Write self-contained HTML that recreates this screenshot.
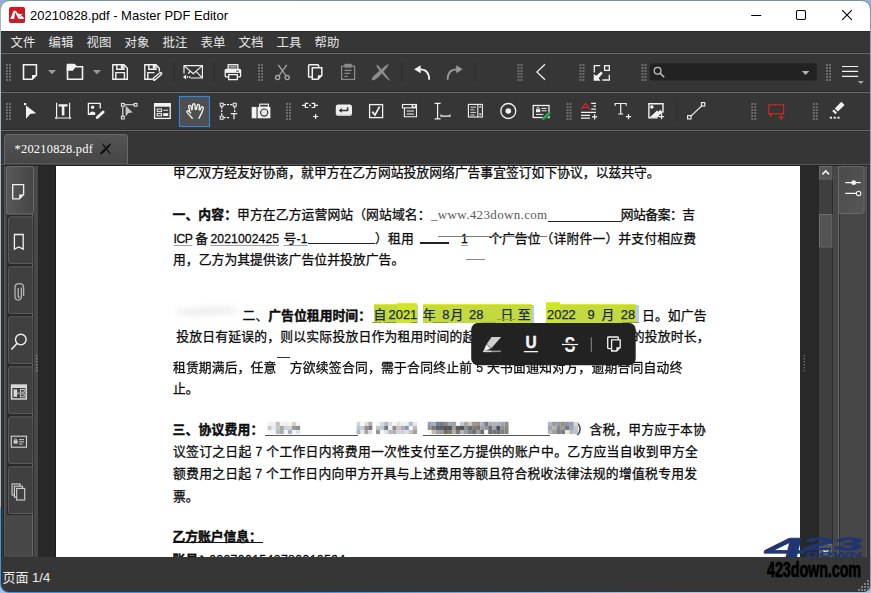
<!DOCTYPE html>
<html lang="zh-CN">
<head>
<meta charset="utf-8">
<title>20210828.pdf - Master PDF Editor</title>
<style>
html,body{margin:0;padding:0;}
body{width:871px;height:593px;overflow:hidden;position:relative;background:#3c5f9a;font-family:"Liberation Sans","Noto Sans CJK SC",sans-serif;}
.abs{position:absolute;}
#desk{left:0;top:0;width:871px;height:593px;background:linear-gradient(to bottom,#8fb0d8 0,#a8c4e0 100%);}
#frame{left:0;top:0;width:871px;height:593px;border-radius:9px 9px 7px 9px;background:linear-gradient(to bottom,#7690aa 0px,#a2b6ca 12px,#a4b8cc 506px,#4a96e0 508px,#3f90dd 593px) left top/300px 100% no-repeat,linear-gradient(to right,#3f90dd 0,#3f90dd 300px,#a8c4e0 700px) left bottom/100% 2px no-repeat,linear-gradient(to bottom,#7690aa 0,#8ca4bc 40px,#8ca4bc 100%);}
#win{left:1px;top:1px;width:869px;height:591px;background:#363636;border-radius:8px 8px 6px 8px;overflow:hidden;}
#title{left:0;top:0;width:869px;height:30px;background:#fff;}
#title .txt{left:29px;top:6px;font-size:13px;color:#000;white-space:nowrap;line-height:18px;}
#menubar{left:0;top:30px;width:869px;height:22px;background:#363636;}
.menu{top:3px;font-size:12.4px;line-height:18px;color:#e6e6e6;white-space:nowrap;}
.hline{left:0;width:869px;height:1px;background:#6a6a6a;}
.grip{width:5px;height:19px;background-image:radial-gradient(circle at 1px 1px,#777 0.9px,transparent 1.1px);background-size:3px 3px;}
.vsep{width:1px;height:20px;background:#4a4a4a;}
svg{position:absolute;overflow:visible;}
#doc{left:55px;top:165px;width:744px;height:391px;background:#fff;overflow:hidden;}
.t{position:absolute;white-space:nowrap;font-size:12.8px;line-height:20px;color:#0c0c0c;-webkit-text-stroke:0.28px #0c0c0c;font-family:"Liberation Sans","Noto Sans CJK SC",sans-serif;}
.b{font-weight:700;-webkit-text-stroke:0.4px #0c0c0c;}
.hl{background:#c2d940;border-top:1px solid #e8ee10;box-sizing:border-box;}
.selb{background:#b4ccf0;}
.l2{font-size:12.9px;}
.hl2{background:#cfe42c;border-top:1px solid #f0f000;box-sizing:border-box;}
.sel{color:#1a2a44;-webkit-text-stroke:0.25px #1a2a44;}
.www{font-family:"Liberation Serif","Noto Serif CJK SC",serif;color:#5a5a5a;font-size:13px;-webkit-text-stroke:0;}
.u{text-decoration:underline;text-decoration-color:#a0a0a0;text-underline-offset:2px;text-decoration-thickness:1px;}
.blur1{filter:blur(0.45px);}
.blur2{filter:blur(0.55px);display:inline-block;}
.l{font-size:12.2px;}
</style>
</head>
<body>
<div id="desk" class="abs"></div>
<div id="frame" class="abs"></div>
<div id="win" class="abs">
  <div id="title" class="abs">
    <div class="abs txt">20210828.pdf - Master PDF Editor</div>
  </div>
  <div id="menubar" class="abs">
    <div class="abs menu" style="left:9.6px">文件</div>
    <div class="abs menu" style="left:47.6px">编辑</div>
    <div class="abs menu" style="left:85.6px">视图</div>
    <div class="abs menu" style="left:123.6px">对象</div>
    <div class="abs menu" style="left:161.6px">批注</div>
    <div class="abs menu" style="left:199.6px">表单</div>
    <div class="abs menu" style="left:237.6px">文档</div>
    <div class="abs menu" style="left:275.6px">工具</div>
    <div class="abs menu" style="left:313.6px">帮助</div>
  </div>
  <div class="abs hline" style="top:52px"></div>
  <div id="tb1" class="abs" style="left:0;top:53px;width:869px;height:38px;"></div>
  <div class="abs hline" style="top:91px"></div>
  <div id="tb2" class="abs" style="left:0;top:92px;width:869px;height:37px;"></div>
  <div class="abs hline" style="top:129px"></div>
  <div id="tabbar" class="abs" style="left:0;top:130px;width:869px;height:35px;"></div>
  <!--DOC-START-->
  <div id="doc" class="abs">
    <div class="abs hl" style="left:317.8px;top:138.0px;width:43.5px;height:19.0px;"></div>
    <div class="abs hl2" style="left:341.2px;top:136.5px;width:20.1px;height:20.5px;"></div>
    <div class="abs hl" style="left:366.6px;top:138.0px;width:109.4px;height:19.0px;"></div>
    <div class="abs hl" style="left:490.3px;top:138.0px;width:89.8px;height:19.0px;"></div>
    <div class="abs hl2" style="left:490.3px;top:136.3px;width:14.1px;height:20.7px;"></div>
    <div class="abs selb" style="left:476.0px;top:139.0px;width:2.0px;height:18.0px;"></div>
    <div class="abs selb" style="left:580.1px;top:139.0px;width:3.0px;height:18.0px;"></div>
    <div class="abs selb" style="left:361.3px;top:139.0px;width:1.2px;height:18.0px;"></div>
    <div class="t" style="left:117.0px;top:-2.8px;letter-spacing:0.01px;">甲乙双方经友好协商，就甲方在乙方网站投放网络广告事宜签订如下协议，以兹共守。</div>
    <div class="t" style="left:116.5px;top:39.2px;letter-spacing:0.11px;"><span class="b">一、内容：</span>甲方在乙方运营网站（网站域名：</div>
    <div class="t www" style="left:375.0px;top:39.2px;letter-spacing:0.34px;">_www.423down.com</div>
    <div class="t" style="left:564.7px;top:39.2px;letter-spacing:-0.46px;">网站备案：吉</div>
    <div class="t" style="left:117.6px;top:63.0px;letter-spacing:-0.51px;"><span class="u"><span class="l">ICP</span></span></div>
    <div class="t" style="left:139.2px;top:63.0px;">备</div>
    <div class="t" style="left:154.4px;top:63.0px;letter-spacing:0.10px;"><span class="u"><span class="l">2021002425</span></span></div>
    <div class="t" style="left:227.6px;top:63.0px;letter-spacing:0.12px;"><span class="u">号<span class="l">-1</span></span></div>
    <div class="t" style="left:319.0px;top:63.0px;letter-spacing:0.20px;">）租用</div>
    <div class="t" style="left:405.0px;top:63.0px;"><span class="u"><span class="l">1</span></span></div>
    <div class="t" style="left:433.0px;top:63.0px;letter-spacing:0.08px;">个广告位</div>
    <div class="t" style="left:484.5px;top:63.0px;letter-spacing:0.18px;">（详附件一）并支付相应费</div>
    <div class="t" style="left:117.0px;top:84.0px;letter-spacing:0.05px;">用，乙方为其提供该广告位并投放广告。</div>
    <div class="t" style="left:186.5px;top:140.0px;letter-spacing:0.06px;">二、<span class="b">广告位租用时间：</span></div>
    <div class="t sel" style="left:317.6px;top:139.0px;">自</div>
    <div class="t sel" style="left:332.6px;top:139.0px;"><span class="l2">2021</span></div>
    <div class="t sel" style="left:366.8px;top:139.0px;">年</div>
    <div class="t sel" style="left:386.2px;top:139.0px;"><span class="l2">8</span></div>
    <div class="t sel" style="left:394.4px;top:139.0px;">月</div>
    <div class="t sel" style="left:413.1px;top:139.0px;"><span class="l2">28</span></div>
    <div class="t sel" style="left:444.6px;top:139.0px;">日</div>
    <div class="t sel" style="left:461.8px;top:139.0px;">至</div>
    <div class="t sel" style="left:491.1px;top:139.0px;"><span class="l2">2022</span></div>
    <div class="t sel" style="left:531.4px;top:139.0px;"><span class="l2">9</span></div>
    <div class="t sel" style="left:545.4px;top:139.0px;">月</div>
    <div class="t sel" style="left:564.8px;top:139.0px;"><span class="l2">28</span></div>
    <div class="t" style="left:586.0px;top:140.0px;letter-spacing:0.14px;">日。如广告</div>
    <div class="t" style="left:120.2px;top:161.0px;letter-spacing:0.22px;">投放日有延误的，则以实际投放日作为租用时间的起始日，并相应顺延乙方广告的投放时长，</div>
    <div class="t blur1" style="left:117.0px;top:191.5px;letter-spacing:0.12px;">租赁期满后，任意</div>
    <div class="t blur1" style="left:233.7px;top:191.5px;letter-spacing:0.25px;">方欲续签合同，需于合同终止前 <span class="l">5</span> <span class="blur2">天书面通知对方，逾期合同</span>自动终</div>
    <div class="t" style="left:117.0px;top:213.0px;">止。</div>
    <div class="t" style="left:116.5px;top:254.3px;letter-spacing:0.20px;"><span class="b">三、协议费用：</span></div>
    <div class="t" style="left:520.5px;top:254.3px;letter-spacing:0.15px;">）含税，甲方应于本协</div>
    <div class="t" style="left:117.0px;top:276.0px;letter-spacing:0.29px;">议签订之日起 <span class="l">7</span> 个工作日内将费用一次性支付至乙方提供的账户中。乙方应当自收到甲方全</div>
    <div class="t" style="left:117.0px;top:298.3px;letter-spacing:0.27px;">额费用之日起 <span class="l">7</span> 个工作日内向甲方开具与上述费用等额且符合税收法律法规的增值税专用发</div>
    <div class="t" style="left:117.0px;top:321.0px;">票。</div>
    <div class="t" style="left:116.5px;top:361.4px;letter-spacing:-0.05px;"><span class="b">乙方账户信息：</span></div>
    <div class="t" style="left:116.5px;top:383.5px;letter-spacing:0.20px;"><span class="b">账号：</span></div>
    <div class="t" style="left:153.0px;top:383.5px;letter-spacing:0.41px;"><span class="l">6227001543780010594</span></div>
    <div class="abs" style="left:491.5px;top:55.0px;width:74.5px;height:1.0px;background:#222;"></div>
    <div class="abs" style="left:251.5px;top:77.0px;width:67.5px;height:1.0px;background:#222;"></div>
    <div class="abs" style="left:363.5px;top:76.4px;width:29.0px;height:1.6px;background:#222;"></div>
    <div class="abs" style="left:382.0px;top:70.0px;width:109.0px;height:1.0px;background:#7a7a7a;"></div>
    <div class="abs" style="left:410.0px;top:92.5px;width:19.0px;height:1.0px;background:#8a8a8a;"></div>
    <div class="abs" style="left:221.4px;top:191.0px;width:12.6px;height:1.0px;background:#333;"></div>
    <div class="abs" style="left:208.8px;top:268.6px;width:93.7px;height:1.1px;background:#555;"></div>
    <div class="abs" style="left:366.8px;top:268.6px;width:127.0px;height:1.1px;background:#555;"></div>
    <div class="abs" style="left:116.5px;top:375.8px;width:90.5px;height:1.2px;background:#111;"></div>
    <div class="abs" style="left:316.2px;top:156.0px;width:8.8px;height:1.0px;background:#8a9a3c;"></div>
    <div class="abs" style="left:327.5px;top:156.0px;width:12.0px;height:1.0px;background:#8a9a3c;"></div>
    <div class="abs" style="left:354.8px;top:156.0px;width:6.5px;height:1.0px;background:#8a9a3c;"></div>
    <div class="abs" style="left:377.3px;top:156.0px;width:14.5px;height:1.0px;background:#8a9a3c;"></div>
    <div class="abs" style="left:441.0px;top:152.8px;width:19.0px;height:1.0px;background:#98a844;"></div>
    <div class="abs" style="left:425.7px;top:156.0px;width:14.7px;height:1.0px;background:#a4b444;"></div>
    <div class="abs" style="left:566.0px;top:156.0px;width:17.0px;height:1.0px;background:#8a9a3c;"></div>
<svg style="left:0;top:0;filter:blur(0.3px)" width="744" height="391"><rect x="211.7" y="255.8" width="4.14" height="4.17" fill="#f0f0f0"/><rect x="211.7" y="259.9" width="4.14" height="4.17" fill="#cacaca"/><rect x="211.7" y="263.9" width="4.14" height="4.17" fill="#f5f5f5"/><rect x="215.7" y="255.8" width="4.14" height="4.17" fill="#f0f0f0"/><rect x="215.7" y="259.9" width="4.14" height="4.17" fill="#e4ecfa"/><rect x="215.7" y="263.9" width="4.14" height="4.17" fill="#f5f5f5"/><rect x="219.8" y="255.8" width="4.14" height="4.17" fill="#c8c0b2"/><rect x="219.8" y="259.9" width="4.14" height="4.17" fill="#c8c8c8"/><rect x="219.8" y="263.9" width="4.14" height="4.17" fill="#bcbcbc"/><rect x="223.8" y="255.8" width="4.14" height="4.17" fill="#f5f5f5"/><rect x="223.8" y="259.9" width="4.14" height="4.17" fill="#a7a7a7"/><rect x="223.8" y="263.9" width="4.14" height="4.17" fill="#a3abb9"/><rect x="227.8" y="255.8" width="4.14" height="4.17" fill="#efefef"/><rect x="227.8" y="259.9" width="4.14" height="4.17" fill="#c9d1df"/><rect x="227.8" y="263.9" width="4.14" height="4.17" fill="#f5f5f5"/><rect x="231.9" y="255.8" width="4.14" height="4.17" fill="#fcf4e6"/><rect x="231.9" y="259.9" width="4.14" height="4.17" fill="#d5d5d5"/><rect x="231.9" y="263.9" width="4.14" height="4.17" fill="#aab2c0"/><rect x="235.9" y="255.8" width="4.14" height="4.17" fill="#d4d4d4"/><rect x="235.9" y="259.9" width="4.14" height="4.17" fill="#979797"/><rect x="235.9" y="263.9" width="4.14" height="4.17" fill="#edf5ff"/><rect x="240.0" y="255.8" width="4.14" height="4.17" fill="#f5f5f5"/><rect x="240.0" y="259.9" width="4.14" height="4.17" fill="#8f8f8f"/><rect x="240.0" y="263.9" width="4.14" height="4.17" fill="#d6e2f4"/><rect x="300.6" y="255.8" width="4.00" height="4.17" fill="#d2d2d2"/><rect x="300.6" y="259.9" width="4.00" height="4.17" fill="#bac6d8"/><rect x="300.6" y="263.9" width="4.00" height="4.17" fill="#abb3c1"/><rect x="304.5" y="255.8" width="4.00" height="4.17" fill="#fff9eb"/><rect x="304.5" y="259.9" width="4.00" height="4.17" fill="#bfcbdd"/><rect x="304.5" y="263.9" width="4.00" height="4.17" fill="#efe7d9"/><rect x="308.4" y="255.8" width="4.00" height="4.17" fill="#dedede"/><rect x="308.4" y="259.9" width="4.00" height="4.17" fill="#909090"/><rect x="308.4" y="263.9" width="4.00" height="4.17" fill="#ada597"/><rect x="312.3" y="255.8" width="4.00" height="4.17" fill="#aeaeae"/><rect x="312.3" y="259.9" width="4.00" height="4.17" fill="#787878"/><rect x="312.3" y="263.9" width="4.00" height="4.17" fill="#dcdcdc"/><rect x="320.0" y="255.8" width="4.20" height="4.17" fill="#f5f5f5"/><rect x="320.0" y="259.9" width="4.20" height="4.17" fill="#c5c5c5"/><rect x="320.0" y="263.9" width="4.20" height="4.17" fill="#969696"/><rect x="324.1" y="255.8" width="4.20" height="4.17" fill="#d8d8d8"/><rect x="324.1" y="259.9" width="4.20" height="4.17" fill="#bec6d4"/><rect x="324.1" y="263.9" width="4.20" height="4.17" fill="#f5f5f5"/><rect x="328.2" y="255.8" width="4.20" height="4.17" fill="#bababa"/><rect x="328.2" y="259.9" width="4.20" height="4.17" fill="#717987"/><rect x="328.2" y="263.9" width="4.20" height="4.17" fill="#e0e0e0"/><rect x="332.3" y="255.8" width="4.20" height="4.17" fill="#dddddd"/><rect x="332.3" y="259.9" width="4.20" height="4.17" fill="#efefef"/><rect x="332.3" y="263.9" width="4.20" height="4.17" fill="#b8b8b8"/><rect x="336.4" y="255.8" width="4.20" height="4.17" fill="#f5f5f5"/><rect x="336.4" y="259.9" width="4.20" height="4.17" fill="#8c8c8c"/><rect x="336.4" y="263.9" width="4.20" height="4.17" fill="#b6aea0"/><rect x="340.5" y="255.8" width="4.20" height="4.17" fill="#e9e1d3"/><rect x="340.5" y="259.9" width="4.20" height="4.17" fill="#c4c4c4"/><rect x="340.5" y="263.9" width="4.20" height="4.17" fill="#d2d2d2"/><rect x="344.6" y="255.8" width="4.20" height="4.17" fill="#e8f0fe"/><rect x="344.6" y="259.9" width="4.20" height="4.17" fill="#adadad"/><rect x="344.6" y="263.9" width="4.20" height="4.17" fill="#cfcfcf"/><rect x="348.7" y="255.8" width="4.20" height="4.17" fill="#f0f0f0"/><rect x="348.7" y="259.9" width="4.20" height="4.17" fill="#8793a5"/><rect x="348.7" y="263.9" width="4.20" height="4.17" fill="#d7dfed"/><rect x="352.8" y="255.8" width="4.20" height="4.17" fill="#bbbbbb"/><rect x="352.8" y="259.9" width="4.20" height="4.17" fill="#edf5ff"/><rect x="352.8" y="263.9" width="4.20" height="4.17" fill="#c5c5c5"/><rect x="356.9" y="255.8" width="4.20" height="4.17" fill="#e3ebf9"/><rect x="356.9" y="259.9" width="4.20" height="4.17" fill="#bbbbbb"/><rect x="356.9" y="263.9" width="4.20" height="4.17" fill="#a8a092"/><rect x="371.7" y="255.8" width="4.13" height="4.17" fill="#94a0b2"/><rect x="371.7" y="259.9" width="4.13" height="4.17" fill="#929292"/><rect x="371.7" y="263.9" width="4.13" height="4.17" fill="#f5f5f5"/><rect x="375.7" y="255.8" width="4.13" height="4.17" fill="#a6b2c4"/><rect x="375.7" y="259.9" width="4.13" height="4.17" fill="#777777"/><rect x="375.7" y="263.9" width="4.13" height="4.17" fill="#c1b9ab"/><rect x="379.8" y="255.8" width="4.13" height="4.17" fill="#78808e"/><rect x="379.8" y="259.9" width="4.13" height="4.17" fill="#616161"/><rect x="379.8" y="263.9" width="4.13" height="4.17" fill="#94a0b2"/><rect x="383.8" y="255.8" width="4.13" height="4.17" fill="#6f7b8d"/><rect x="383.8" y="259.9" width="4.13" height="4.17" fill="#58606e"/><rect x="383.8" y="263.9" width="4.13" height="4.17" fill="#a29a8c"/><rect x="387.8" y="255.8" width="4.13" height="4.17" fill="#8d8577"/><rect x="387.8" y="259.9" width="4.13" height="4.17" fill="#535353"/><rect x="387.8" y="263.9" width="4.13" height="4.17" fill="#766e60"/><rect x="391.9" y="255.8" width="4.13" height="4.17" fill="#a8a8a8"/><rect x="391.9" y="259.9" width="4.13" height="4.17" fill="#4b5769"/><rect x="391.9" y="263.9" width="4.13" height="4.17" fill="#837b6d"/><rect x="395.9" y="255.8" width="4.13" height="4.17" fill="#94a0b2"/><rect x="395.9" y="259.9" width="4.13" height="4.17" fill="#a69e90"/><rect x="395.9" y="263.9" width="4.13" height="4.17" fill="#aeaeae"/><rect x="399.9" y="255.8" width="4.13" height="4.17" fill="#f5f5f5"/><rect x="399.9" y="259.9" width="4.13" height="4.17" fill="#5b5b5b"/><rect x="399.9" y="263.9" width="4.13" height="4.17" fill="#777777"/><rect x="404.0" y="255.8" width="4.13" height="4.17" fill="#c4ccda"/><rect x="404.0" y="259.9" width="4.13" height="4.17" fill="#515151"/><rect x="404.0" y="263.9" width="4.13" height="4.17" fill="#b7b7b7"/><rect x="408.0" y="255.8" width="4.13" height="4.17" fill="#afa799"/><rect x="408.0" y="259.9" width="4.13" height="4.17" fill="#878f9d"/><rect x="408.0" y="263.9" width="4.13" height="4.17" fill="#9c9c9c"/><rect x="412.0" y="255.8" width="4.13" height="4.17" fill="#c9c9c9"/><rect x="412.0" y="259.9" width="4.13" height="4.17" fill="#756d5f"/><rect x="412.0" y="263.9" width="4.13" height="4.17" fill="#7d8593"/><rect x="416.1" y="255.8" width="4.13" height="4.17" fill="#9e9688"/><rect x="416.1" y="259.9" width="4.13" height="4.17" fill="#7c7c7c"/><rect x="416.1" y="263.9" width="4.13" height="4.17" fill="#666e7c"/><rect x="420.1" y="255.8" width="4.13" height="4.17" fill="#999183"/><rect x="420.1" y="259.9" width="4.13" height="4.17" fill="#737373"/><rect x="420.1" y="263.9" width="4.13" height="4.17" fill="#9d9d9d"/><rect x="424.2" y="255.8" width="4.13" height="4.17" fill="#a9b5c7"/><rect x="424.2" y="259.9" width="4.13" height="4.17" fill="#9f9f9f"/><rect x="424.2" y="263.9" width="4.13" height="4.17" fill="#6d6d6d"/><rect x="428.2" y="255.8" width="4.13" height="4.17" fill="#757d8b"/><rect x="428.2" y="259.9" width="4.13" height="4.17" fill="#8b97a9"/><rect x="428.2" y="263.9" width="4.13" height="4.17" fill="#f5f5f5"/><rect x="432.2" y="255.8" width="4.13" height="4.17" fill="#ababab"/><rect x="432.2" y="259.9" width="4.13" height="4.17" fill="#727272"/><rect x="432.2" y="263.9" width="4.13" height="4.17" fill="#6f6f6f"/><rect x="436.3" y="255.8" width="4.13" height="4.17" fill="#b1b1b1"/><rect x="436.3" y="259.9" width="4.13" height="4.17" fill="#9ba3b1"/><rect x="436.3" y="263.9" width="4.13" height="4.17" fill="#727272"/><rect x="440.3" y="255.8" width="4.13" height="4.17" fill="#a6b2c4"/><rect x="440.3" y="259.9" width="4.13" height="4.17" fill="#515151"/><rect x="440.3" y="263.9" width="4.13" height="4.17" fill="#656d7b"/><rect x="444.3" y="255.8" width="4.13" height="4.17" fill="#a4a4a4"/><rect x="444.3" y="259.9" width="4.13" height="4.17" fill="#909090"/><rect x="444.3" y="263.9" width="4.13" height="4.17" fill="#7d7d7d"/><rect x="448.4" y="255.8" width="4.13" height="4.17" fill="#8692a4"/><rect x="448.4" y="259.9" width="4.13" height="4.17" fill="#8d8577"/><rect x="448.4" y="263.9" width="4.13" height="4.17" fill="#828282"/><rect x="491.8" y="255.8" width="4.41" height="4.17" fill="#aebacc"/><rect x="491.8" y="259.9" width="4.41" height="4.17" fill="#9ca4b2"/><rect x="491.8" y="263.9" width="4.41" height="4.17" fill="#b8b8b8"/><rect x="496.1" y="255.8" width="4.41" height="4.17" fill="#989898"/><rect x="496.1" y="259.9" width="4.41" height="4.17" fill="#b6b6b6"/><rect x="496.1" y="263.9" width="4.41" height="4.17" fill="#a49c8e"/><rect x="500.4" y="255.8" width="4.41" height="4.17" fill="#979797"/><rect x="500.4" y="259.9" width="4.41" height="4.17" fill="#7f8b9d"/><rect x="500.4" y="263.9" width="4.41" height="4.17" fill="#7f7f7f"/><rect x="504.7" y="255.8" width="4.41" height="4.17" fill="#909090"/><rect x="504.7" y="259.9" width="4.41" height="4.17" fill="#a59d8f"/><rect x="504.7" y="263.9" width="4.41" height="4.17" fill="#808080"/><rect x="509.1" y="255.8" width="4.41" height="4.17" fill="#949494"/><rect x="509.1" y="259.9" width="4.41" height="4.17" fill="#6c788a"/><rect x="509.1" y="263.9" width="4.41" height="4.17" fill="#ede5d7"/><rect x="513.4" y="255.8" width="4.41" height="4.17" fill="#919daf"/><rect x="513.4" y="259.9" width="4.41" height="4.17" fill="#98a4b6"/><rect x="513.4" y="263.9" width="4.41" height="4.17" fill="#c1b9ab"/><rect x="517.7" y="255.8" width="4.41" height="4.17" fill="#d6d6d6"/><rect x="517.7" y="259.9" width="4.41" height="4.17" fill="#c5c5c5"/><rect x="517.7" y="263.9" width="4.41" height="4.17" fill="#b6c2d4"/></svg><div class="abs" style="left:120px;top:138px;width:62px;height:16px;background:radial-gradient(ellipse at 30% 50%,#ececec 0,transparent 60%),radial-gradient(ellipse at 75% 40%,#efefef 0,transparent 55%);filter:blur(2px);"></div>
  </div>
<!--DOC-END-->
  <!--CHROME-START-->
<svg id="chrome" style="left:0;top:0" width="869" height="591" viewBox="1 1 869 591">
<g fill="#6c6c6c"><rect x="6" y="64" width="2" height="2"/><rect x="9" y="64" width="2" height="2"/><rect x="6" y="67" width="2" height="2"/><rect x="9" y="67" width="2" height="2"/><rect x="6" y="70" width="2" height="2"/><rect x="9" y="70" width="2" height="2"/><rect x="6" y="73" width="2" height="2"/><rect x="9" y="73" width="2" height="2"/><rect x="6" y="76" width="2" height="2"/><rect x="9" y="76" width="2" height="2"/><rect x="6" y="79" width="2" height="2"/><rect x="9" y="79" width="2" height="2"/></g>
<path d="M23.5,64.8 H36.4 V75.2 L32.2,79.3 H23.5 Z" fill="none" stroke="#f2f2f2" stroke-width="1.6"/><path d="M32,75 H36.6 L32,79.5 Z" fill="#f2f2f2"/>
<path d="M48,70 H56 L52,74.3 Z" fill="#9a9a9a"/>
<path d="M66.7,63.8 H74.5 L77,66 H83.3 V67.6 H75.4 L72.8,70.8 H66.7 Z" fill="#f2f2f2"/><path d="M67.5,66 V79.3 H82.5 V67" fill="none" stroke="#f2f2f2" stroke-width="1.6"/>
<path d="M92.8,70 H101 L96.9,74.3 Z" fill="#9a9a9a"/>
<g fill="none" stroke="#f2f2f2" stroke-width="1.4"><path d="M112.8,64.8 H124 L127.3,68.2 V79.3 H112.8 Z"/><path d="M115.8,79.3 V72.6 H124.4 V79.3"/><path d="M116.8,64.8 V69.2 H124 V64.8"/></g><rect x="120.8" y="65" width="2.4" height="3.6" fill="#f2f2f2"/>
<g fill="none" stroke="#f2f2f2" stroke-width="1.4"><path d="M152.5,79.3 H144.8 V64.8 H156 L159.3,68.2 V71.5"/><path d="M147.8,79.3 V72.6 H154.5"/><path d="M148.8,64.8 V69.2 H156 V64.8"/></g><rect x="152.8" y="65" width="2.4" height="3.6" fill="#f2f2f2"/>
<path d="M154.2,79 L160.6,73.6" stroke="#f2f2f2" stroke-width="3.6" stroke-linecap="round"/><path d="M154.6,78.6 L160.2,73.9" stroke="#363636" stroke-width="1.1" stroke-linecap="round"/>
<rect x="173.5" y="63" width="1" height="18" fill="#2a2a2a"/>
<g fill="none" stroke="#f2f2f2" stroke-width="1.2"><path d="M190.5,78 H202.4 V65.6 H184 V73.5"/><path d="M184.3,65.9 L193.2,73.6 L202.1,65.9"/><path d="M196,71.3 L202,77.6"/><path d="M190.4,71.3 L188,73.6"/></g>
<path d="M183,77 L186.2,74.6 V79.4 Z" fill="#f2f2f2"/><rect x="187" y="76.2" width="1.3" height="1.6" fill="#f2f2f2"/><rect x="189" y="76.2" width="1.3" height="1.6" fill="#f2f2f2"/>
<rect x="213.5" y="63" width="1" height="18" fill="#2a2a2a"/>
<g fill="none" stroke="#f2f2f2" stroke-width="1.3"><rect x="228.2" y="64.7" width="9.6" height="4.6"/><path d="M229.5,66.9 H236.5" stroke-width="1"/><rect x="225.2" y="69.3" width="15.4" height="7.6" rx="1.2"/></g>
<rect x="225.5" y="69.5" width="14.8" height="3.4" fill="#f2f2f2"/><rect x="236.2" y="70.6" width="2.6" height="1" fill="#363636"/><rect x="228.7" y="74.6" width="8.6" height="5" fill="#363636" stroke="#f2f2f2" stroke-width="1.3"/>
<g fill="#6c6c6c"><rect x="258" y="64" width="2" height="2"/><rect x="261" y="64" width="2" height="2"/><rect x="258" y="67" width="2" height="2"/><rect x="261" y="67" width="2" height="2"/><rect x="258" y="70" width="2" height="2"/><rect x="261" y="70" width="2" height="2"/><rect x="258" y="73" width="2" height="2"/><rect x="261" y="73" width="2" height="2"/><rect x="258" y="76" width="2" height="2"/><rect x="261" y="76" width="2" height="2"/><rect x="258" y="79" width="2" height="2"/><rect x="261" y="79" width="2" height="2"/></g>
<g fill="none" stroke="#a6a6a6" stroke-width="1.3"><path d="M278.3,64.8 L286.2,76"/><path d="M286.7,64.8 L278.8,76"/><circle cx="277.6" cy="77.6" r="2.1"/><circle cx="287.2" cy="77.6" r="2.1"/></g>
<g stroke="#f2f2f2" stroke-width="1.5"><rect x="308.6" y="64.8" width="10" height="12.2" fill="none" rx="0.8"/><path d="M312.3,67.8 H321.8 V75.5 L318,79.3 H312.3 Z" fill="#363636"/></g><path d="M317.8,75.3 H322 L317.8,79.5 Z" fill="#f2f2f2"/>
<g fill="none" stroke="#8c8c8c" stroke-width="1.2"><rect x="341.6" y="66.2" width="13" height="13.2"/><path d="M344.5,70.4 H351.6 M344.5,73.4 H350 M344.5,76.4 H347.6" stroke-width="1.1"/></g><rect x="344.4" y="63.8" width="7.4" height="3.8" fill="#8c8c8c"/>
<path d="M372,80 C371,78 374.6,74.6 379.4,71 C384,67.2 386,64.8 388.6,64 C388.4,66.6 385.2,69.8 381.8,73.4 C378.4,77 374.4,81.6 372,80 Z" fill="#8c8c8c"/><path d="M376.4,64.8 C377.6,64.2 379.6,66.8 382.6,70.6 C385.8,74.6 388.6,78.4 390.6,81.2 C387.4,79.6 384.4,76.4 381,72.4 C378.2,69 376,66.2 376.4,64.8 Z" fill="#8c8c8c"/>
<rect x="401.5" y="63" width="1" height="18" fill="#2a2a2a"/>
<path d="M414.2,69.2 L420.6,65.2 V73.2 Z" fill="#f2f2f2"/><path d="M420,69.3 C426.2,69.3 429.2,73.4 429.2,79.8" fill="none" stroke="#f2f2f2" stroke-width="1.8"/>
<path d="M462.6,69.2 L456.2,65.2 V73.2 Z" fill="#9a9a9a"/><path d="M456.8,69.3 C450.6,69.3 447.6,73.4 447.6,79.8" fill="none" stroke="#9a9a9a" stroke-width="1.8"/>
<rect x="474.5" y="63" width="1" height="18" fill="#2a2a2a"/>
<g fill="#6c6c6c"><rect x="517.5" y="64" width="2" height="2"/><rect x="520.5" y="64" width="2" height="2"/><rect x="517.5" y="67" width="2" height="2"/><rect x="520.5" y="67" width="2" height="2"/><rect x="517.5" y="70" width="2" height="2"/><rect x="520.5" y="70" width="2" height="2"/><rect x="517.5" y="73" width="2" height="2"/><rect x="520.5" y="73" width="2" height="2"/><rect x="517.5" y="76" width="2" height="2"/><rect x="520.5" y="76" width="2" height="2"/><rect x="517.5" y="79" width="2" height="2"/><rect x="520.5" y="79" width="2" height="2"/></g>
<path d="M545,64.3 L536.9,72 L545,79.7" fill="none" stroke="#f2f2f2" stroke-width="1.2"/>
<g fill="#6c6c6c"><rect x="579.5" y="64" width="2" height="2"/><rect x="582.5" y="64" width="2" height="2"/><rect x="579.5" y="67" width="2" height="2"/><rect x="582.5" y="67" width="2" height="2"/><rect x="579.5" y="70" width="2" height="2"/><rect x="582.5" y="70" width="2" height="2"/><rect x="579.5" y="73" width="2" height="2"/><rect x="582.5" y="73" width="2" height="2"/><rect x="579.5" y="76" width="2" height="2"/><rect x="582.5" y="76" width="2" height="2"/><rect x="579.5" y="79" width="2" height="2"/><rect x="582.5" y="79" width="2" height="2"/></g>
<g fill="none" stroke="#f2f2f2" stroke-width="1.3"><path d="M594.3,72.4 V65.7 H600.2"/><rect x="604.6" y="65.7" width="4.7" height="4.7"/><path d="M609.3,74.8 V80 H602.4"/></g><path d="M593.7,80.7 V74 L596.2,75.8 L601.2,71.6 L602.8,73.2 L598.6,78.2 L600.6,80.7 Z" fill="#f2f2f2"/>
<g fill="#6c6c6c"><rect x="641.5" y="64" width="2" height="2"/><rect x="644.5" y="64" width="2" height="2"/><rect x="641.5" y="67" width="2" height="2"/><rect x="644.5" y="67" width="2" height="2"/><rect x="641.5" y="70" width="2" height="2"/><rect x="644.5" y="70" width="2" height="2"/><rect x="641.5" y="73" width="2" height="2"/><rect x="644.5" y="73" width="2" height="2"/><rect x="641.5" y="76" width="2" height="2"/><rect x="644.5" y="76" width="2" height="2"/><rect x="641.5" y="79" width="2" height="2"/><rect x="644.5" y="79" width="2" height="2"/></g>
<rect x="649.5" y="63.2" width="167.3" height="17.4" rx="3" fill="#222"/>
<circle cx="657.6" cy="70.7" r="3.4" fill="none" stroke="#c4c4c4" stroke-width="1.25"/><path d="M660.1,73.3 L664.2,77.3" stroke="#c4c4c4" stroke-width="1.5"/>
<path d="M801.8,71 H809.4 L805.6,75.1 Z" fill="#b0b0b0"/>
<g fill="#6c6c6c"><rect x="826" y="64" width="2" height="2"/><rect x="829" y="64" width="2" height="2"/><rect x="826" y="67" width="2" height="2"/><rect x="829" y="67" width="2" height="2"/><rect x="826" y="70" width="2" height="2"/><rect x="829" y="70" width="2" height="2"/><rect x="826" y="73" width="2" height="2"/><rect x="829" y="73" width="2" height="2"/><rect x="826" y="76" width="2" height="2"/><rect x="829" y="76" width="2" height="2"/><rect x="826" y="79" width="2" height="2"/><rect x="829" y="79" width="2" height="2"/></g>
<path d="M842,66.5 H858.2 M842,71.4 H858.2 M842,76.4 H858.2" stroke="#f2f2f2" stroke-width="1.2"/>
<path d="M857.8,81 H863.8 L860.8,84 Z" fill="#a8a8a8"/>
<g fill="#6c6c6c"><rect x="6" y="103" width="2" height="2"/><rect x="9" y="103" width="2" height="2"/><rect x="6" y="106" width="2" height="2"/><rect x="9" y="106" width="2" height="2"/><rect x="6" y="109" width="2" height="2"/><rect x="9" y="109" width="2" height="2"/><rect x="6" y="112" width="2" height="2"/><rect x="9" y="112" width="2" height="2"/><rect x="6" y="115" width="2" height="2"/><rect x="9" y="115" width="2" height="2"/><rect x="6" y="118" width="2" height="2"/><rect x="9" y="118" width="2" height="2"/></g>
<rect x="24" y="103" width="2.2" height="2.2" fill="#f2f2f2"/><path d="M26,105.4 L36.2,113.2 L30.2,114 L26,118.8 Z" fill="#f2f2f2"/>
<g stroke="#f2f2f2" fill="none"><path d="M56.6,102.8 V117.6 M69.6,102.8 V117.6" stroke-width="1.2"/><path d="M55.4,118 H70.8" stroke-width="1.2"/></g>
<path d="M54.8,118 L56.6,116.4 V119.6 Z M71.4,118 L69.6,116.4 V119.6 Z" fill="#f2f2f2"/>
<path d="M58.6,104.2 H67.6 V106.6 H64.4 V115.6 H61.8 V106.6 H58.6 Z" fill="#f2f2f2"/>
<path d="M100.2,108.6 V103.4 H88.4 V114.4 H95" fill="none" stroke="#f2f2f2" stroke-width="1.3"/><circle cx="92.6" cy="107.2" r="1.7" fill="#f2f2f2"/><path d="M89.4,114 C89.4,110.6 95.6,110.6 95.6,114 Z" fill="#f2f2f2"/>
<path d="M97.2,117.6 L103.2,112" stroke="#f2f2f2" stroke-width="2.8" stroke-linecap="round"/>
<rect x="121.4" y="103.4" width="2.8" height="2.8" fill="none" stroke="#f2f2f2" stroke-width="1"/><rect x="134.2" y="103.4" width="2.8" height="2.8" fill="none" stroke="#f2f2f2" stroke-width="1"/><rect x="121.4" y="116.2" width="2.8" height="2.8" fill="none" stroke="#f2f2f2" stroke-width="1"/>
<path d="M124.4,104.8 H134 M122.8,106.4 V116" stroke="#f2f2f2" stroke-width="1.1" fill="none"/>
<path d="M125.6,105.6 L132.6,112.6 L128.6,113 L125.6,116.6 Z" fill="#c4c4c4"/>
<rect x="154.6" y="103.7" width="15.6" height="14.7" fill="none" stroke="#f2f2f2" stroke-width="1.3"/><rect x="154" y="103.1" width="16.8" height="3.6" fill="#f2f2f2"/>
<g fill="none" stroke="#f2f2f2" stroke-width="1"><rect x="157.2" y="109" width="4.4" height="2.4"/><rect x="157.2" y="113.4" width="4.4" height="2.4"/><path d="M163.4,110.2 H168"/></g><rect x="163.2" y="113.2" width="5" height="2.8" fill="#f2f2f2"/>
<rect x="179.5" y="96.5" width="30" height="30" fill="#4f4f4f" stroke="#2f86e0" stroke-width="1.2"/>
<g fill="none" stroke="#f2f2f2" stroke-width="1.35" stroke-linecap="round" stroke-linejoin="round"><path d="M192.3,118.2 L187.2,112.6 C186.2,111.3 187.7,110.1 188.9,111.2 L190.7,113"/><path d="M189.8,110.8 L188.6,107 C188.2,105.3 190.3,104.8 190.9,106.4 L192,109.8"/><path d="M192.1,109 L192.6,104.9 C192.8,103.3 194.9,103.3 195,104.9 L195.3,109.5"/><path d="M196.3,109.3 L197.3,105.4 C197.8,104 199.8,104.4 199.6,106 L199,109.8"/><path d="M200,110 L201.2,107.5 C202,106.2 203.6,107 203.2,108.6 C202.6,112 200.6,114.6 199,118.2"/></g>
<rect x="220.2" y="103.2" width="3" height="3" fill="none" stroke="#f2f2f2" stroke-width="1"/><rect x="233.2" y="103.2" width="3" height="3" fill="none" stroke="#f2f2f2" stroke-width="1"/><rect x="220.2" y="116.2" width="3" height="3" fill="none" stroke="#f2f2f2" stroke-width="1"/>
<g fill="none" stroke="#f2f2f2" stroke-width="1.1"><path d="M223.6,104.7 H233 M221.7,106.6 V116 M234.7,106.6 V112.4 M223.6,117.7 H229.4" stroke-width="1.3" stroke-dasharray="2.2 1.1"/><path d="M230.8,113.6 H237.2 M234,113.6 V119.2" stroke-width="1.2"/></g>
<rect x="251.7" y="106.9" width="4.8" height="11.4" fill="#f2f2f2"/><rect x="257.6" y="106.9" width="12.8" height="11.4" fill="#f2f2f2"/><rect x="259.8" y="104.2" width="8.6" height="3" fill="none" stroke="#f2f2f2" stroke-width="1.2"/>
<circle cx="264.2" cy="112.6" r="4.2" fill="#363636"/><circle cx="264.2" cy="112.6" r="3" fill="#e6e6e6"/>
<g fill="#6c6c6c"><rect x="286" y="103" width="2" height="2"/><rect x="289" y="103" width="2" height="2"/><rect x="286" y="106" width="2" height="2"/><rect x="289" y="106" width="2" height="2"/><rect x="286" y="109" width="2" height="2"/><rect x="289" y="109" width="2" height="2"/><rect x="286" y="112" width="2" height="2"/><rect x="289" y="112" width="2" height="2"/><rect x="286" y="115" width="2" height="2"/><rect x="289" y="115" width="2" height="2"/><rect x="286" y="118" width="2" height="2"/><rect x="289" y="118" width="2" height="2"/></g>
<g fill="none" stroke="#f2f2f2" stroke-width="1.2"><path d="M302,105.4 H305 M308.4,103.3 H305.4 V107.5 H308.4 M311.6,103.3 H314.6 V107.5 H311.6 M315,105.4 H318 M309,105.4 H311"/><path d="M313,116.5 H318.2 M315.6,113.9 V119.1"/></g>
<rect x="335.8" y="104.6" width="16.2" height="11.2" rx="2.4" fill="#eeeeee"/><rect x="336.8" y="114.6" width="14.2" height="1.2" rx="0.6" fill="#c8c8c8"/>
<path d="M347.6,107.2 V110.4 H341" fill="none" stroke="#333" stroke-width="1.5"/><path d="M338.6,110.4 L341.8,108 V112.8 Z" fill="#333"/>
<rect x="369.6" y="104.6" width="13" height="13" fill="none" stroke="#f2f2f2" stroke-width="1.3"/><path d="M372.2,111.6 L375,115 L379.6,106.6" fill="none" stroke="#f2f2f2" stroke-width="1.7"/>
<g fill="none" stroke="#f2f2f2" stroke-width="1.1"><rect x="402.5" y="104.5" width="14" height="3.4"/><path d="M404.4,107.9 V116.8 H416.5 V107.9"/><path d="M406.6,111 H414 M406.6,114 H414"/></g><rect x="411.6" y="104.5" width="5" height="3.4" fill="#f2f2f2"/><path d="M412.6,105.3 H415.6 L414.1,107.2 Z" fill="#444"/>
<path d="M437.6,103.6 V118.6 M434.6,103.4 H440.6 M434.6,118.8 H440.6 M441,114.4 V116.2 H450 V114.4" fill="none" stroke="#f2f2f2" stroke-width="1.2"/>
<g fill="none" stroke="#f2f2f2" stroke-width="1.1"><rect x="468.4" y="104.4" width="14" height="12.6"/><path d="M477.8,104.4 V117"/><path d="M470.4,107.2 H476 M470.4,109.8 H474.6 M470.4,112.4 H476 M470.4,115 H474.6" stroke-width="0.9"/></g><path d="M478.8,107.6 H481.6 L480.2,105.6 Z M478.8,113.6 H481.6 L480.2,115.8 Z" fill="#f2f2f2"/>
<circle cx="508.3" cy="111" r="7.5" fill="none" stroke="#f2f2f2" stroke-width="1.3"/><circle cx="508.3" cy="111" r="2.8" fill="#f2f2f2"/>
<rect x="533.2" y="105.5" width="15.8" height="12" fill="none" stroke="#f2f2f2" stroke-width="1.3"/><rect x="536" y="109.2" width="4.2" height="3" fill="#f2f2f2"/><path d="M537,109.4 V108.4 C537,107 539.2,107 539.2,108.4 V109.4" fill="none" stroke="#f2f2f2" stroke-width="0.9"/><path d="M541.6,108.4 H546.6 M541.6,110.8 H546.6 M536,114.4 H543.4" stroke="#f2f2f2" stroke-width="1"/>
<path d="M543.6,118.4 L549,113" stroke="#363636" stroke-width="4.4" stroke-linecap="butt"/><path d="M543.4,118.6 L549.2,112.8" stroke="#22b14c" stroke-width="2.6" stroke-linecap="round"/>
<g fill="#6c6c6c"><rect x="566.5" y="103" width="2" height="2"/><rect x="569.5" y="103" width="2" height="2"/><rect x="566.5" y="106" width="2" height="2"/><rect x="569.5" y="106" width="2" height="2"/><rect x="566.5" y="109" width="2" height="2"/><rect x="569.5" y="109" width="2" height="2"/><rect x="566.5" y="112" width="2" height="2"/><rect x="569.5" y="112" width="2" height="2"/><rect x="566.5" y="115" width="2" height="2"/><rect x="569.5" y="115" width="2" height="2"/><rect x="566.5" y="118" width="2" height="2"/><rect x="569.5" y="118" width="2" height="2"/></g>
<path d="M581.2,109.6 L585.5,103.5 L589.8,109.6 M582.8,107.5 H588.2" fill="none" stroke="#e3202a" stroke-width="1.2"/>
<path d="M591.2,103.3 H596 M593.4,106.2 H596 M591.2,109.1 H596 M581,112.3 H596 M581,115.3 H590 M581,118.2 H590 M592,116.9 H597.2 M594.6,114.3 V119.5" fill="none" stroke="#f2f2f2" stroke-width="1.2"/>
<path d="M615.2,105.8 V103.5 H626.2 V105.8 M620.7,103.5 V114 M618.2,114 H623.2 M625.9,116.6 H631.1 M628.5,114 V119.2" fill="none" stroke="#f2f2f2" stroke-width="1.2"/>
<path d="M657.5,117.9 H648.9 V103.8 H663 V112.5" fill="none" stroke="#f2f2f2" stroke-width="1.4"/><circle cx="651.9" cy="107" r="1.8" fill="#f2f2f2"/><path d="M649.6,117.4 L657,110.6 L658.6,111.8 L660.2,109.8 L662.6,112 V113 L657.6,117.4 Z" fill="#f2f2f2"/>
<path d="M658.9,116.6 H664.1 M661.5,114 V119.2" stroke="#363636" stroke-width="3.2"/><path d="M658.9,116.6 H664.1 M661.5,114 V119.2" stroke="#f2f2f2" stroke-width="1.2"/>
<rect x="676.5" y="102" width="1" height="19" fill="#2a2a2a"/>
<path d="M690.6,116.4 L702,105.6" stroke="#f2f2f2" stroke-width="1.3"/><rect x="687.6" y="115.6" width="3.4" height="3.4" fill="none" stroke="#f2f2f2" stroke-width="1.1"/><rect x="701.4" y="102.6" width="3.4" height="3.4" fill="none" stroke="#f2f2f2" stroke-width="1.1"/>
<g fill="#6c6c6c"><rect x="751.2" y="103" width="2" height="2"/><rect x="754.2" y="103" width="2" height="2"/><rect x="751.2" y="106" width="2" height="2"/><rect x="754.2" y="106" width="2" height="2"/><rect x="751.2" y="109" width="2" height="2"/><rect x="754.2" y="109" width="2" height="2"/><rect x="751.2" y="112" width="2" height="2"/><rect x="754.2" y="112" width="2" height="2"/><rect x="751.2" y="115" width="2" height="2"/><rect x="754.2" y="115" width="2" height="2"/><rect x="751.2" y="118" width="2" height="2"/><rect x="754.2" y="118" width="2" height="2"/></g>
<path d="M768.8,104.7 H783.6 V113.8 H768.8 Z M778.6,117.3 H784 M781.3,114.6 V120" fill="none" stroke="#dc261c" stroke-width="1.1"/><path d="M769.4,113.8 H773 L770,117.6 Z" fill="#dc261c"/>
<g fill="#6c6c6c"><rect x="812.8" y="103" width="2" height="2"/><rect x="815.8" y="103" width="2" height="2"/><rect x="812.8" y="106" width="2" height="2"/><rect x="815.8" y="106" width="2" height="2"/><rect x="812.8" y="109" width="2" height="2"/><rect x="815.8" y="109" width="2" height="2"/><rect x="812.8" y="112" width="2" height="2"/><rect x="815.8" y="112" width="2" height="2"/><rect x="812.8" y="115" width="2" height="2"/><rect x="815.8" y="115" width="2" height="2"/><rect x="812.8" y="118" width="2" height="2"/><rect x="815.8" y="118" width="2" height="2"/></g>
<path d="M834.8,108.4 L841.4,101.8 L844.6,105 L838,111.6 Z" fill="#f2f2f2"/><path d="M832.2,111 L833.8,109.4 L837,112.6 L835.4,114.2 Z" fill="#f2f2f2"/><rect x="829.8" y="116.8" width="2.2" height="1.8" fill="#f2f2f2"/><rect x="833.6" y="116.8" width="2.2" height="1.8" fill="#f2f2f2"/><rect x="837.4" y="116.8" width="2.2" height="1.8" fill="#f2f2f2"/>
<defs>
<linearGradient id="gTab" x1="0" y1="0" x2="0" y2="1"><stop offset="0" stop-color="#545454"/><stop offset="1" stop-color="#464646"/></linearGradient>
<linearGradient id="gSide" x1="0" y1="0" x2="1" y2="0"><stop offset="0" stop-color="#585858"/><stop offset="1" stop-color="#464646"/></linearGradient>
<linearGradient id="gSideR" x1="0" y1="0" x2="1" y2="1"><stop offset="0" stop-color="#4a4a4a"/><stop offset="1" stop-color="#565656"/></linearGradient>
</defs>
<rect x="9" y="7" width="16" height="16" rx="2" fill="#d8141f"/><path d="M25,9 V21 C25,22.2 24.2,23 23,23 H11 Z" fill="#c41f2e"/>
<path d="M10.2,18.9 L13.6,10.8 H15.4 L14.2,18.9 Z M14.6,10.8 H16 L20,17.6 L18.6,18.9 L16.2,14.6 Z M17.2,13.2 L22.6,14.4 L19.6,17 Z M20.8,16.2 H22.6 L24.2,18.9 H19.2 Z" fill="#fff"/>
<path d="M751.2,15.5 H761.2" stroke="#000" stroke-width="1"/><rect x="796.5" y="10.5" width="9" height="9" rx="1.4" fill="none" stroke="#000" stroke-width="1.1"/><path d="M842.2,10.2 L851.8,19.8 M851.8,10.2 L842.2,19.8" stroke="#000" stroke-width="1.1"/>
<rect x="1" y="31" width="869" height="1" fill="#2b2b2b"/><rect x="1" y="52" width="869" height="1" fill="#2e2e2e"/><rect x="1" y="91" width="869" height="1" fill="#2e2e2e"/><rect x="1" y="129" width="869" height="1" fill="#2e2e2e"/>
<rect x="1" y="131" width="869" height="1" fill="#2e2e2e"/>
<path d="M4.5,164 V137 Q4.5,134.5 7,134.5 H125 Q127.5,134.5 127.5,137 V164 Z" fill="url(#gTab)" stroke="#686868" stroke-width="1"/>
<rect x="1" y="164" width="869" height="1" fill="#585858"/><rect x="1" y="165" width="869" height="1" fill="#242424"/>
<rect x="5" y="164" width="122" height="1" fill="#464646"/>
<path d="M100,154.4 C99.6,153 102,150.8 105,148.2 C107.6,145.8 109.6,143.6 111,143.2 C111.2,145 109,147.2 106.4,149.8 C104,152.2 101.4,155.2 100,154.4 Z" fill="#111"/><path d="M102.2,143.6 C103,143.2 104.4,145 106.2,147.8 C108.2,150.8 110.4,152.8 111.8,154.6 C109.6,153.8 107.4,151.6 105.4,148.8 C103.6,146.2 102,144.4 102.2,143.6 Z" fill="#111"/>
<rect x="1" y="166" width="55" height="391" fill="#383838"/>
<rect x="1" y="166" width="1" height="391" fill="#303030"/>
<rect x="38" y="166" width="18" height="391" fill="#282828"/><rect x="55" y="166" width="1" height="391" fill="#1c1c1c"/>
<rect x="3" y="166" width="1" height="391" fill="#272727"/><rect x="4" y="166" width="1" height="390" fill="#585858"/><rect x="5" y="166" width="27" height="390" fill="#474747"/>
<rect x="7" y="215" width="25" height="300" fill="#2a2a2a"/>
<rect x="4" y="555.5" width="34" height="1" fill="#555"/>
<rect x="32" y="166" width="1" height="390" fill="#686868"/><rect x="33" y="166" width="1" height="390" fill="#2e2e2e"/><rect x="34" y="166" width="4" height="390" fill="#484848"/>
<rect x="6.5" y="166.5" width="27" height="47.5" rx="2" fill="url(#gSide)" stroke="#6a6a6a" stroke-width="1"/>
<path d="M32.5,216.8 H10.5 Q8.5,216.8 8.5,218.8 V261.5 Q8.5,263.5 10.5,263.5 H32.5" fill="#404040" stroke="#5a5a5a" stroke-width="1"/>
<path d="M32.5,266.8 H10.5 Q8.5,266.8 8.5,268.8 V311.5 Q8.5,313.5 10.5,313.5 H32.5" fill="#404040" stroke="#5a5a5a" stroke-width="1"/>
<path d="M32.5,316.8 H10.5 Q8.5,316.8 8.5,318.8 V361.5 Q8.5,363.5 10.5,363.5 H32.5" fill="#404040" stroke="#5a5a5a" stroke-width="1"/>
<path d="M32.5,366.8 H10.5 Q8.5,366.8 8.5,368.8 V411.5 Q8.5,413.5 10.5,413.5 H32.5" fill="#404040" stroke="#5a5a5a" stroke-width="1"/>
<path d="M32.5,416.8 H10.5 Q8.5,416.8 8.5,418.8 V461.5 Q8.5,463.5 10.5,463.5 H32.5" fill="#404040" stroke="#5a5a5a" stroke-width="1"/>
<path d="M32.5,466.8 H10.5 Q8.5,466.8 8.5,468.8 V511.5 Q8.5,513.5 10.5,513.5 H32.5" fill="#404040" stroke="#5a5a5a" stroke-width="1"/>
<path d="M12.7,184.6 H23.6 V194.6 L19.4,198.8 H12.7 Z" fill="none" stroke="#f2f2f2" stroke-width="1.3"/><path d="M19.2,194.4 H23.8 L19.2,199 Z" fill="#f2f2f2"/>
<path d="M14.4,234.5 H23.2 V249.2 L18.8,247 L14.4,249.2 Z" fill="none" stroke="#f2f2f2" stroke-width="1.3"/>
<path d="M21.4,287.5 V296.6 C21.4,301.2 15,301.2 15,296.6 V287.4 C15,282.4 23.6,282.4 23.6,287.4 V296 M18.2,288 V296.4 C18.2,297.6 19.4,297.6 19.4,296.4" fill="none" stroke="#b4b4b4" stroke-width="1.3"/>
<circle cx="20.8" cy="339.6" r="5.3" fill="none" stroke="#f2f2f2" stroke-width="1.4"/><path d="M17,343.6 L11.4,349.6" stroke="#f2f2f2" stroke-width="1.5"/>
<rect x="10.8" y="384.3" width="16.2" height="15.4" fill="#d8d8d8"/><rect x="12.4" y="388" width="13" height="10.2" fill="#3c3c3c"/><rect x="13.6" y="389.4" width="3.6" height="7.4" fill="#d8d8d8"/><rect x="20.4" y="389.4" width="3.8" height="2.8" fill="none" stroke="#d8d8d8" stroke-width="0.9"/><rect x="20.4" y="394" width="3.8" height="2.8" fill="none" stroke="#d8d8d8" stroke-width="0.9"/><path d="M17.2,393.2 H20.4" stroke="#d8d8d8" stroke-width="0.9"/>
<rect x="11.3" y="436.2" width="15.2" height="11" fill="none" stroke="#d4d4d4" stroke-width="1.1"/><rect x="13.6" y="440.4" width="4" height="3.2" fill="#d4d4d4"/><path d="M14.6,440.6 V439.6 C14.6,438.4 16.6,438.4 16.6,439.6 V440.6" fill="none" stroke="#d4d4d4" stroke-width="0.9"/><path d="M19,439.6 H24 M19,441.8 H24 M19,444 H22.6" stroke="#d4d4d4" stroke-width="0.9"/>
<g fill="#404040" stroke="#d4d4d4" stroke-width="1.1"><rect x="12.1" y="484" width="8" height="11"/><rect x="14.4" y="486.2" width="8" height="11"/><rect x="16.7" y="488.4" width="8" height="11.6"/></g>
<rect x="36" y="355" width="1.4" height="1.4" fill="#8a8a8a"/>
<rect x="36" y="358" width="1.4" height="1.4" fill="#8a8a8a"/>
<rect x="36" y="361" width="1.4" height="1.4" fill="#8a8a8a"/>
<rect x="36" y="364" width="1.4" height="1.4" fill="#8a8a8a"/>
<rect x="36" y="367" width="1.4" height="1.4" fill="#8a8a8a"/>
<rect x="36" y="370" width="1.4" height="1.4" fill="#8a8a8a"/>
<rect x="800" y="166" width="70" height="391" fill="#383838"/>
<rect x="800" y="166" width="19" height="391" fill="#282828"/>
<rect x="819" y="166" width="13" height="391" fill="#3f3f3f"/>
<rect x="832" y="166" width="1" height="391" fill="#2c2c2c"/><rect x="833" y="166" width="5" height="391" fill="#474747"/><rect x="838" y="166" width="1" height="391" fill="#6a6a6a"/><rect x="839" y="166" width="1" height="391" fill="#2c2c2c"/>
<rect x="840" y="166" width="26" height="391" fill="#464646"/><rect x="866" y="166" width="1" height="391" fill="#5c5c5c"/><rect x="867" y="166" width="1" height="391" fill="#2a2a2a"/>
<rect x="819.5" y="166.5" width="12.4" height="12.4" fill="#555" stroke="#6c6c6c" stroke-width="1"/><path d="M822.4,174.4 L825.7,171 L829,174.4" fill="none" stroke="#f2f2f2" stroke-width="1.7"/>
<rect x="819.5" y="214.5" width="12.4" height="32.4" fill="#545454" stroke="#6c6c6c" stroke-width="1"/>
<rect x="819.5" y="544.5" width="12.4" height="12" fill="#555" stroke="#6c6c6c" stroke-width="1"/><path d="M822.4,549 L825.7,552.4 L829,549" fill="none" stroke="#f2f2f2" stroke-width="1.7"/>
<rect x="838.5" y="166.5" width="25.6" height="47" rx="2" fill="url(#gSideR)" stroke="#6a6a6a" stroke-width="1"/>
<path d="M845.2,182.7 H860.8 M845.2,193.4 H856.2" stroke="#f2f2f2" stroke-width="1.2"/><circle cx="853.7" cy="182.7" r="2.4" fill="#f2f2f2"/><circle cx="858.6" cy="193.4" r="2.2" fill="#4c4c4c" stroke="#f2f2f2" stroke-width="1.1"/>
<rect x="803.6" y="355" width="1.4" height="1.4" fill="#6a6a6a"/>
<rect x="803.6" y="358" width="1.4" height="1.4" fill="#6a6a6a"/>
<rect x="803.6" y="361" width="1.4" height="1.4" fill="#6a6a6a"/>
<rect x="803.6" y="364" width="1.4" height="1.4" fill="#6a6a6a"/>
<rect x="803.6" y="367" width="1.4" height="1.4" fill="#6a6a6a"/>
<rect x="803.6" y="370" width="1.4" height="1.4" fill="#6a6a6a"/>
<rect x="867" y="580" width="2" height="2" fill="#808080"/>
<rect x="867" y="583" width="2" height="2" fill="#808080"/>
<rect x="864" y="583" width="2" height="2" fill="#808080"/>
<rect x="867" y="586" width="2" height="2" fill="#808080"/>
<rect x="864" y="586" width="2" height="2" fill="#808080"/>
<rect x="861" y="586" width="2" height="2" fill="#808080"/>
<rect x="867" y="589" width="2" height="2" fill="#808080"/>
<rect x="864" y="589" width="2" height="2" fill="#808080"/>
<rect x="861" y="589" width="2" height="2" fill="#808080"/>
<rect x="858" y="589" width="2" height="2" fill="#808080"/>
</svg>
  <!--CHROME-END-->
  <div id="tablabel" class="abs" style="left:13.5px;top:139px;font-family:'Liberation Serif','Noto Serif CJK SC',serif;font-size:12.4px;line-height:18px;color:#fff;letter-spacing:0.25px;white-space:nowrap;">*20210828.pdf</div>
  <div id="status" class="abs" style="left:0;top:556px;width:869px;height:35px;">
    <div class="abs" style="left:1.5px;top:12px;font-size:13px;line-height:18px;color:#ececec;white-space:nowrap;">页面 1/4</div>
  </div>
  <!--OVER-START-->
<svg id="over" style="left:0;top:0" width="869" height="591" viewBox="1 1 869 591">
<rect x="471.2" y="323" width="164.5" height="42.2" rx="6.5" fill="#222"/>
<path d="M491.6,337 H501.2 L491.4,348.2 L486.6,344.2 Z" fill="#cfcfcf"/><path d="M486.3,344.6 L490.8,348.6 L483.4,351.4 Z" fill="#f4f4f4"/><rect x="483.2" y="350.6" width="17.6" height="1.5" fill="#9a9a9a"/><rect x="483.2" y="350.6" width="8" height="1.5" fill="#d8d8d8"/>
<text transform="translate(531.05,348.1) scale(0.93,1)" text-anchor="middle" font-family="Liberation Sans, sans-serif" font-weight="bold" font-size="16.6" fill="#f4f4f4" stroke="#f4f4f4" stroke-width="0.5">U</text><rect x="523.9" y="351" width="14.2" height="1.3" fill="#f4f4f4"/>
<text transform="translate(569.9,352.2) scale(0.74,1)" text-anchor="middle" font-family="Liberation Sans, sans-serif" font-weight="bold" font-size="22.2" fill="#f4f4f4">S</text><rect x="561.9" y="343.8" width="16.2" height="1.4" fill="#f4f4f4"/>
<rect x="563" y="342.6" width="14" height="1.2" fill="#222"/><rect x="563" y="345.2" width="14" height="1.2" fill="#222"/>
<rect x="590.8" y="337.2" width="1" height="14.8" fill="#8a8a8a"/>
<rect x="607.7" y="337" width="10.6" height="11.6" rx="0.8" fill="none" stroke="#f4f4f4" stroke-width="1.3"/><path d="M611.6,339.8 H620.2 V347.4 L616.6,351 H611.6 Z" fill="#222" stroke="#f4f4f4" stroke-width="1.3"/><path d="M616.4,347.2 H620.4 L616.4,351.2 Z" fill="#f4f4f4"/>
<g font-family="Liberation Sans, sans-serif" font-weight="bold" fill="#1f3674" stroke="#1f3674" stroke-linejoin="round">
<text transform="translate(762.2,556.8) skewX(-14) scale(2.68,1)" font-size="27.4" stroke-width="0.6">4</text>
<text transform="translate(802.2,549.7) skewX(-14) scale(3.07,1)" font-size="17.4" stroke-width="0.5">23</text>
<text transform="translate(805.6,556.5) skewX(-14) scale(2.44,1)" font-size="7.2" stroke-width="0.25">DOWN</text>
</g>
<text x="767.6" y="577.4" font-family="Liberation Sans, sans-serif" font-weight="bold" font-size="22.3" fill="#2a2a2a" opacity="0.5" textLength="94.5" lengthAdjust="spacingAndGlyphs">423down.com</text>
<text x="767" y="576.6" font-family="Liberation Sans, sans-serif" font-weight="bold" font-size="22.3" fill="#000" stroke="#000" stroke-width="0.7" textLength="94" lengthAdjust="spacingAndGlyphs">423down.com</text>
</svg>
  <!--OVER-END-->
</div>
</body>
</html>
